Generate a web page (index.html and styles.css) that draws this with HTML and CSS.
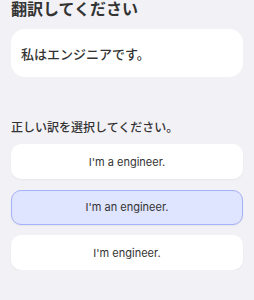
FILE: index.html
```html
<!DOCTYPE html>
<html lang="ja">
<head>
<meta charset="utf-8">
<link rel="stylesheet" href="styles.css">
</head>
<body>
<div class="page">
  <h1 class="title">翻訳してください</h1>
  <div class="prompt-card">私はエンジニアです。</div>
  <p class="label">正しい訳を選択してください。</p>
  <div class="options">
    <button class="option">I'm a engineer.</button>
    <button class="option selected">I'm an engineer.</button>
    <button class="option">I'm engineer.</button>
  </div>
</div>
</body>
</html>
```
FILE: styles.css
```css
html, body {
  margin: 0;
  padding: 0;
  background: #f2f1f6;
}
body {
  font-family: Inter, "Noto Sans CJK JP", sans-serif;
  color: #333;
}
.page {
  padding: 0 11px;
  display: flex;
  flex-direction: column;
}
.title {
  margin: 0;
  font-family: "Noto Sans CJK JP", sans-serif;
  font-size: 16px;
  font-weight: 700;
  line-height: 17px;
  color: #333;
}
.prompt-card {
  margin-top: 12px;
  height: 48px;
  box-sizing: border-box;
  background: #fff;
  border-radius: 14px;
  padding: 0 10px;
  display: flex;
  align-items: center;
  font-family: "Noto Sans CJK JP", sans-serif;
  font-size: 13px;
  font-weight: 500;
  color: #333;
}
.label {
  margin: 44px 0 0;
  font-family: "Noto Sans CJK JP", sans-serif;
  font-size: 12px;
  font-weight: 500;
  line-height: 12px;
  color: #333;
}
.options {
  margin-top: 11px;
  display: flex;
  flex-direction: column;
  gap: 10.5px;
}
.option {
  height: 35px;
  box-sizing: border-box;
  background: #fff;
  border: 1.5px solid transparent;
  border-radius: 10px;
  box-shadow: 0 1px 2px rgba(0,0,0,0.05);
  font-family: Inter, sans-serif;
  font-size: 11px;
  font-weight: 400;
  color: #333;
  padding: 0;
}
.option.selected {
  background: #dfe4ff;
  border-color: #a4b2f7;
}
```
